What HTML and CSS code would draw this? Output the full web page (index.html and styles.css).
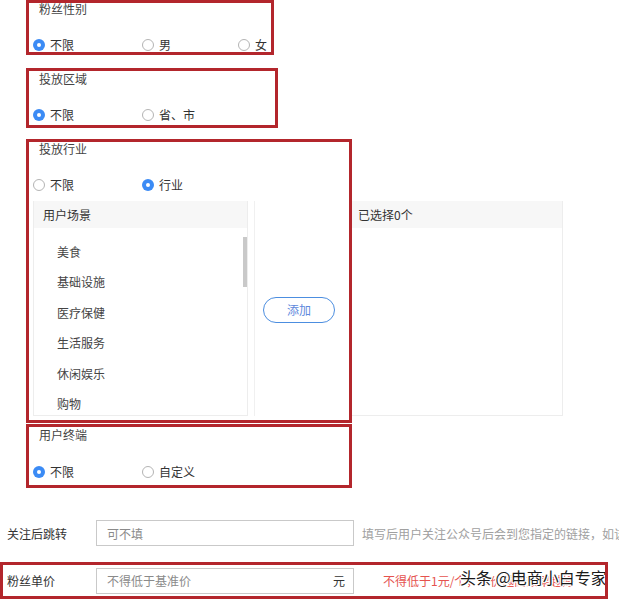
FILE: index.html
```html
<!DOCTYPE html>
<html lang="zh-CN">
<head>
<meta charset="utf-8">
<title>定向设置</title>
<link rel="stylesheet" href="styles.css">
</head>
<body>
<div class="box box-gender">
  <div class="box-title">粉丝性别</div>
  <div class="radios">
    <label class="radio checked"><span class="dot"></span>不限</label>
    <label class="radio"><span class="dot"></span>男</label>
    <label class="radio"><span class="dot"></span>女</label>
  </div>
</div>

<div class="box box-region">
  <div class="box-title">投放区域</div>
  <div class="radios">
    <label class="radio checked"><span class="dot"></span>不限</label>
    <label class="radio"><span class="dot"></span>省、市</label>
  </div>
</div>

<div class="box box-industry">
  <div class="box-title">投放行业</div>
  <div class="radios">
    <label class="radio"><span class="dot"></span>不限</label>
    <label class="radio checked"><span class="dot"></span>行业</label>
  </div>
  <div class="picker">
    <div class="list-panel">
      <div class="list-head">用户场景</div>
      <div class="list-body">
        <div class="list-item">美食</div>
        <div class="list-item">基础设施</div>
        <div class="list-item">医疗保健</div>
        <div class="list-item">生活服务</div>
        <div class="list-item">休闲娱乐</div>
        <div class="list-item">购物</div>
        <span class="thumb"></span>
      </div>
    </div>
    <div class="picker-mid">
      <button class="add-btn" type="button">添加</button>
    </div>
    <div class="chosen-panel">
      <div class="chosen-head">已选择0个</div>
    </div>
  </div>
</div>

<div class="box box-terminal">
  <div class="box-title">用户终端</div>
  <div class="radios">
    <label class="radio checked"><span class="dot"></span>不限</label>
    <label class="radio"><span class="dot"></span>自定义</label>
  </div>
</div>

<div class="field-row">
  <div class="field-label">关注后跳转</div>
  <input class="text-input" type="text" placeholder="可不填">
  <div class="field-hint">填写后用户关注公众号后会到您指定的链接，如该</div>
</div>

<div class="box box-price">
  <div class="field-label">粉丝单价</div>
  <div class="unit-input">
    <input type="text" placeholder="不得低于基准价">
    <span class="unit">元</span>
  </div>
  <div class="price-hint">不得低于1元/个，单价越高效果越好</div>
  <div class="watermark">头条 @电商小白专家</div>
</div>
</body>
</html>
```

FILE: styles.css
```css
html, body {
  margin: 0;
  padding: 0;
}
body {
  width: 619px;
  height: 599px;
  overflow: hidden;
  background: #fff;
  font-family: "Noto Sans CJK SC", "Noto Sans", sans-serif;
  font-size: 12px;
  color: #333;
}

.box {
  border: 3px solid #b3262c;
  margin-left: 26px;
  box-sizing: border-box;
}
.box-title {
  line-height: 12px;
  height: 12px;
  padding-left: 10px;
  color: #444;
}

.box-gender {
  width: 248px;
  padding: 0;
}
.box-region {
  width: 252px;
  margin-top: 13px;
  padding: 2px 0 3px;
}
.box-industry {
  width: 326px;
  margin-top: 11px;
  padding: 1px 0 4px;
}
.box-terminal {
  width: 326px;
  margin-top: 1px;
  padding: 2px 0 6px;
}

.radios {
  display: grid;
  grid-template-columns: 109px 96px auto;
  margin-top: 23px;
  padding-left: 4px;
  height: 14px;
  line-height: 14px;
}
.box-terminal .radios {
  margin-top: 24px;
}
.radio {
  display: flex;
  align-items: center;
  gap: 5px;
  color: #333;
  white-space: nowrap;
}
.dot {
  width: 12px;
  height: 12px;
  box-sizing: border-box;
  border-radius: 50%;
  border: 1px solid #b4b4b4;
  background: #fff;
  position: relative;
  flex: none;
}
.radio.checked .dot {
  border: none;
  background: #3b8bf5;
}
.radio.checked .dot::after {
  content: "";
  position: absolute;
  left: 4px;
  top: 4px;
  width: 4px;
  height: 4px;
  border-radius: 50%;
  background: #fff;
}

.picker {
  display: flex;
  margin-top: 9px;
  margin-left: 4px;
  width: 530px;
  height: 215px;
}
.list-panel {
  width: 215px;
  height: 215px;
  box-sizing: border-box;
  border: 1px solid #ededed;
  border-top: none;
  display: flex;
  flex-direction: column;
}
.list-head, .chosen-head {
  height: 27px;
  line-height: 27px;
  background: #f7f7f7;
  color: #333;
  flex: none;
}
.list-head {
  padding-left: 9px;
}
.list-body {
  position: relative;
  flex: 1;
  overflow: hidden;
  padding-top: 9px;
}
.list-item {
  height: 30.4px;
  line-height: 30.4px;
  padding-left: 23px;
  color: #444;
}
.thumb {
  position: absolute;
  left: 209px;
  top: 9px;
  width: 4px;
  height: 50px;
  background: #c9c9c9;
}

.picker-mid {
  width: 98px;
  margin-left: 6px;
  border-left: 1px solid #f0f0f0;
  box-sizing: border-box;
  display: flex;
  align-items: center;
  padding-top: 3px;
  padding-left: 8px;
}
.add-btn {
  width: 72px;
  height: 26px;
  border: 1px solid #4c8ee0;
  border-radius: 13px;
  background: #fff;
  color: #5e88dc;
  font-family: inherit;
  font-size: 12px;
  line-height: 24px;
  padding: 0;
}

.chosen-panel {
  width: 211px;
  height: 215px;
  box-sizing: border-box;
  border: 1px solid #ededed;
  border-left: none;
  border-top: none;
}
.chosen-head {
  padding-left: 6px;
}

.field-row {
  display: flex;
  align-items: center;
  margin-top: 32px;
  height: 26px;
  padding-left: 7px;
  white-space: nowrap;
  overflow: hidden;
}
.field-label {
  width: 89px;
  flex: none;
  color: #333;
}
.text-input {
  width: 258px;
  height: 26px;
  box-sizing: border-box;
  border: 1px solid #c9c9c9;
  padding: 0 10px;
  font-family: inherit;
  font-size: 12px;
  color: #333;
  outline: none;
  flex: none;
}
.text-input::placeholder,
.unit-input input::placeholder {
  color: #8a8a8a;
}
.field-hint {
  margin-left: 8px;
  color: #a0a0a0;
}

.box-price {
  position: relative;
  margin-left: 0;
  margin-top: 16px;
  width: 608px;
  height: 37px;
  display: flex;
  align-items: center;
  padding-left: 4px;
  white-space: nowrap;
  overflow: hidden;
}
.unit-input {
  width: 258px;
  height: 26px;
  box-sizing: border-box;
  border: 1px solid #c9c9c9;
  display: flex;
  align-items: center;
  padding: 0 8px 0 10px;
  flex: none;
}
.unit-input input {
  flex: 1;
  min-width: 0;
  border: none;
  outline: none;
  padding: 0;
  font-family: inherit;
  font-size: 12px;
  background: transparent;
}
.unit {
  color: #333;
}
.price-hint {
  margin-left: 29px;
  color: #e5534f;
}
.watermark {
  position: absolute;
  left: 457px;
  top: 3px;
  font-size: 16px;
  line-height: 18px;
  color: #1a1a1a;
  text-shadow: 1px 0 #fff, -1px 0 #fff, 0 1px #fff, 0 -1px #fff, 1px 1px #fff, -1px -1px #fff, 1px -1px #fff, -1px 1px #fff;
}
```
